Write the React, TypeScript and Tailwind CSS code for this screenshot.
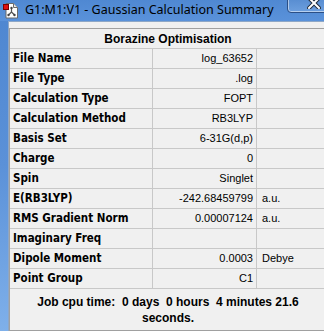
import React from "react";

const rows: [string, string, string][] = [
  ["File Name", "log_63652", ""],
  ["File Type", ".log", ""],
  ["Calculation Type", "FOPT", ""],
  ["Calculation Method", "RB3LYP", ""],
  ["Basis Set", "6-31G(d,p)", ""],
  ["Charge", "0", ""],
  ["Spin", "Singlet", ""],
  ["E(RB3LYP)", "-242.68459799", "a.u."],
  ["RMS Gradient Norm", "0.00007124", "a.u."],
  ["Imaginary Freq", "", ""],
  ["Dipole Moment", "0.0003", "Debye"],
  ["Point Group", "C1", ""],
];

function DocIcon() {
  return (
    <svg width="16" height="17" viewBox="0 0 16 17">
      <path d="M3 1.5 H10.5 L14.5 5.5 V16 H3 Z" fill="#ffffff" stroke="#6b6b6b" strokeWidth="1" />
      <path d="M10.5 1.5 V5.5 H14.5" fill="#e6e6e6" stroke="#6b6b6b" strokeWidth="1" />
      <path d="M8.5 6 V10 M8.5 10 L5.5 13 M8.5 10 L11.5 13" stroke="#555" strokeWidth="1.2" fill="none" />
      <circle cx="8.5" cy="6" r="1.2" fill="#444" />
      <circle cx="5.5" cy="13" r="1.2" fill="#444" />
      <circle cx="11.5" cy="13" r="1.2" fill="#444" />
      <rect x="0.5" y="2.5" width="5" height="5" fill="#e01010" stroke="#7a0000" strokeWidth="1" />
    </svg>
  );
}

export default function App() {
  return (
    <div
      className="relative w-[324px] h-[331px] overflow-hidden flex flex-col bg-gradient-to-b from-[#4d86d0] via-[#5b91d8] to-[#7fb0ea]"
      style={{ fontFamily: '"Liberation Sans", Arial, sans-serif' }}
    >
      {/* Title bar */}
      <div className="h-[21px] shrink-0 flex items-center pl-[3px] bg-gradient-to-b from-[#4f88d2] to-[#5a92da]">
        <DocIcon />
        <span className="ml-[6px] text-[12.5px] text-black leading-none" style={{ fontFamily: '"Noto Sans", "Liberation Sans", sans-serif' }}>
          G1:M1:V1 - Gaussian Calculation Summary
        </span>
      </div>
      {/* Close button */}
      <div className="absolute left-[287px] top-[-7px] w-[44px] h-[20px] rounded-[4px] border border-[#2b4f86] bg-gradient-to-b from-[#4f86cc] to-[#6d9fde] shadow-[inset_0_0_0_1px_rgba(255,255,255,0.5)]">
        <svg className="absolute left-[19px] top-[3px]" width="14" height="12" viewBox="0 0 14 12">
          <path d="M2 1 L12 11 M12 1 L2 11" stroke="#1e2a3a" strokeWidth="4" strokeLinecap="square" />
          <path d="M2 1 L12 11 M12 1 L2 11" stroke="#ffffff" strokeWidth="2" strokeLinecap="square" />
        </svg>
      </div>
      {/* Body */}
      <div className="flex flex-1 min-h-0">
        <div className="w-[8px] shrink-0" />
        <div className="flex-1 bg-[#f0f0f0] border-l border-t border-[#8ea7c6] pt-[6px] overflow-hidden">
          <div className="w-[318px] border border-[#a0a0a0] bg-[#f0f0f0] text-[11px] text-black">
            <div className="h-[20px] border-b border-[#c8c8c8] flex items-center justify-center font-bold text-[12px]">
              Borazine Optimisation
            </div>
            {rows.map(([a, b, c]) => (
              <div key={a} className="h-[20px] border-b border-[#c8c8c8] grid grid-cols-[143px_104px_71px]">
                <div
                  className="border-r border-[#c8c8c8] flex items-center pl-[3px] font-bold text-[11.5px]"
                  style={{ fontFamily: '"Liberation Sans Narrow", "DejaVu Sans Condensed", Roboto, sans-serif' }}
                >
                  {a}
                </div>
                <div className="border-r border-[#c8c8c8] flex items-center justify-end pr-[3px]">{b}</div>
                <div className="flex items-center pl-[5px]">{c}</div>
              </div>
            ))}
            <div className="h-[41px] flex items-center justify-center">
              <div className="w-[290px] text-center font-bold text-[12px] leading-[16px] whitespace-pre-wrap">
                {"Job cpu time:  0 days  0 hours  4 minutes 21.6 seconds."}
              </div>
            </div>
          </div>
        </div>
      </div>
    </div>
  );
}
